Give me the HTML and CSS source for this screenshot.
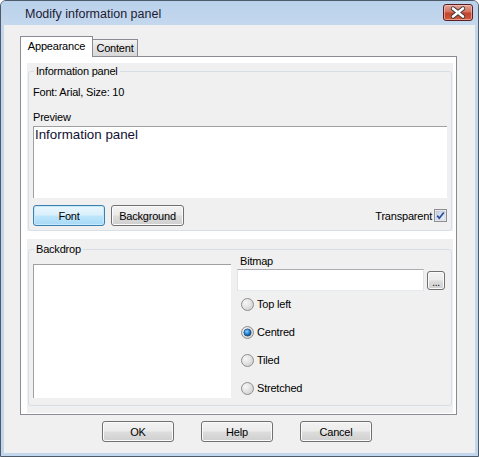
FILE: index.html
```html
<!DOCTYPE html>
<html>
<head>
<meta charset="utf-8">
<link rel="stylesheet" href="styles.css">
</head>
<body>
<div class="window">
  <div class="titlebar">
    <span class="title">Modify information panel</span>
    <div class="close">
      <svg width="30" height="17" viewBox="0 0 30 17">
        <path d="M10 4.5 L20 12.5 M20 4.5 L10 12.5" stroke="#3a3a3a" stroke-width="4.4" stroke-linecap="round" fill="none"/>
        <path d="M10 4.5 L20 12.5 M20 4.5 L10 12.5" stroke="#ffffff" stroke-width="2.6" stroke-linecap="round" fill="none"/>
      </svg>
    </div>
  </div>
  <div class="client">
    <div class="tabs">
      <div class="tab active">Appearance</div>
      <div class="tab">Content</div>
    </div>
    <div class="panel">
      <div class="section s1">
        <div class="group g1">
          <span class="legend">Information panel</span>
          <div class="line">Font: Arial, Size: 10</div>
          <div class="line preview-label">Preview</div>
          <div class="preview">Information panel</div>
          <div class="btnrow">
            <button class="btn default w72">Font</button>
            <button class="btn w73">Background</button>
            <div class="check">
              <span>Transparent</span>
              <svg width="13" height="13" viewBox="0 0 13 13">
                <defs>
                  <linearGradient id="cbg" x1="0" y1="0" x2="1" y2="1">
                    <stop offset="0" stop-color="#c2cfe2"/>
                    <stop offset="1" stop-color="#f1f4f9"/>
                  </linearGradient>
                </defs>
                <rect x="0.5" y="0.5" width="12" height="12" fill="#f4f4f4" stroke="#8f8f8f"/>
                <rect x="2" y="2" width="9" height="9" fill="url(#cbg)" stroke="#b8c4d6" stroke-width="0.6"/>
                <path d="M3.2 6.6 L5.3 9.2 L9.8 3.4" stroke="#2a4a9a" stroke-width="1.7" fill="none"/>
              </svg>
            </div>
          </div>
        </div>
      </div>
      <div class="section s2">
        <div class="group g2">
          <span class="legend">Backdrop</span>
          <div class="cols">
            <div class="listbox"></div>
            <div class="bitmap">
              <div class="line">Bitmap</div>
              <div class="filerow">
                <div class="field"></div>
                <button class="btn dots">...</button>
              </div>
              <div class="radios">
                <div class="radio">
                  <svg width="13" height="13" viewBox="0 0 13 13">
                    <defs>
                      <radialGradient id="rg" cx="0.35" cy="0.35" r="0.75">
                        <stop offset="0" stop-color="#f8f8f8"/>
                        <stop offset="1" stop-color="#cfcfcf"/>
                      </radialGradient>
                      <radialGradient id="rb" cx="0.4" cy="0.35" r="0.7">
                        <stop offset="0" stop-color="#8fd4ff"/>
                        <stop offset="0.5" stop-color="#2a8ad8"/>
                        <stop offset="1" stop-color="#0b3d7a"/>
                      </radialGradient>
                    </defs>
                    <circle cx="6.5" cy="6.5" r="6" fill="url(#rg)" stroke="#8e8f8f"/>
                  </svg>
                  <span>Top left</span>
                </div>
                <div class="radio">
                  <svg width="13" height="13" viewBox="0 0 13 13">
                    <circle cx="6.5" cy="6.5" r="6" fill="url(#rg)" stroke="#8e8f8f"/>
                    <circle cx="6.5" cy="6.5" r="3.6" fill="url(#rb)" stroke="#1d3f6e" stroke-width="0.7"/>
                  </svg>
                  <span>Centred</span>
                </div>
                <div class="radio">
                  <svg width="13" height="13" viewBox="0 0 13 13">
                    <circle cx="6.5" cy="6.5" r="6" fill="url(#rg)" stroke="#8e8f8f"/>
                  </svg>
                  <span>Tiled</span>
                </div>
                <div class="radio">
                  <svg width="13" height="13" viewBox="0 0 13 13">
                    <circle cx="6.5" cy="6.5" r="6" fill="url(#rg)" stroke="#8e8f8f"/>
                  </svg>
                  <span>Stretched</span>
                </div>
              </div>
            </div>
          </div>
        </div>
      </div>
    </div>
    <div class="footer">
      <button class="btn w72">OK</button>
      <button class="btn w72">Help</button>
      <button class="btn w72">Cancel</button>
    </div>
  </div>
</div>
</body>
</html>
```

FILE: styles.css
```css
* { box-sizing: border-box; }

html, body {
  margin: 0;
  padding: 0;
  background: #ffffff;
}

body {
  font-family: "Liberation Sans", Arial, sans-serif;
  font-size: 11px;
  letter-spacing: -0.2px;
  color: #000000;
}

.window {
  width: 479px;
  height: 457px;
  border: 1px solid #4f5a68;
  border-radius: 6px 6px 0 0;
  background: #c2d7ee;
  overflow: hidden;
}

.titlebar {
  height: 24px;
  display: flex;
  align-items: flex-start;
  background: linear-gradient(#b9d1ea, #c4d8ee);
}

.title {
  font-size: 12.5px;
  letter-spacing: 0;
  line-height: 16px;
  margin-top: 5px;
  margin-left: 24px;
  color: #1e1a33;
}

.close {
  margin-left: auto;
  margin-right: 5px;
  margin-top: 3px;
  width: 30px;
  height: 17px;
  border: 1px solid #5a2020;
  border-radius: 3px;
  background: linear-gradient(#e3a497 0%, #d4725f 45%, #c2442c 55%, #cf5a3f 100%);
  box-shadow: inset 0 0 0 1px rgba(255, 210, 200, 0.55);
  position: relative;
}

.close svg {
  position: absolute;
  left: -1px;
  top: -1px;
}

.client {
  margin: 0 3px;
  height: 428px;
  background: #f0f0f0;
  padding: 11px 18px 0 16px;
}

.tabs {
  display: flex;
  align-items: flex-end;
  height: 20px;
}

.tab {
  display: flex;
  align-items: center;
  justify-content: center;
  border: 1px solid #898c95;
  border-bottom: none;
  line-height: 13px;
}

.tab.active {
  width: 73px;
  height: 21px;
  margin-bottom: -1px;
  padding-bottom: 1px;
  background: #ffffff;
  position: relative;
  z-index: 1;
}

.tab:not(.active) {
  width: 45px;
  height: 17px;
  border-left: none;
  background: linear-gradient(#f3f3f3, #e2e2e2 50%, #d8d8d8 100%);
}

.panel {
  width: 437px;
  height: 359px;
  border: 1px solid #898c95;
  background: #ffffff;
  padding: 6px 3px 1px 6px;
  display: flex;
  flex-direction: column;
  gap: 8px;
}

.section {
  background: #f0f0f0;
  padding: 0 1px;
}

.s1 { height: 168px; padding-top: 8px; }
.s2 { height: 174px; padding-top: 10px; }

.group {
  position: relative;
  border: 1px solid #d5dfe5;
  border-radius: 3px;
  padding: 0 4px;
}

.g1 { height: 160px; padding-top: 13px; }
.g2 { height: 157px; padding-top: 4px; }

.legend {
  position: absolute;
  top: -8px;
  left: 5px;
  padding: 0 2px;
  line-height: 14px;
  background: #f0f0f0;
}

.line {
  line-height: 14px;
  height: 14px;
}

.preview-label { margin-top: 11px; }

.preview {
  margin-top: 2px;
  height: 72px;
  background: #ffffff;
  border-top: 1px solid #a0a0a0;
  border-left: 1px solid #a0a0a0;
  font-family: "Liberation Sans", Arial, sans-serif;
  font-size: 13.33px;
  letter-spacing: 0;
  line-height: 15px;
  padding-left: 1px;
  color: #111133;
}

.btnrow {
  margin-top: 7px;
  height: 21px;
  display: flex;
  align-items: center;
  gap: 6px;
}

.btn {
  height: 21px;
  padding: 0;
  margin: 0;
  font-family: "Liberation Sans", Arial, sans-serif;
  font-size: 11px;
  letter-spacing: -0.2px;
  color: #000000;
  border: 1px solid #707070;
  border-radius: 3px;
  background: linear-gradient(#f2f2f2 0%, #ebebeb 48%, #dddddd 52%, #cfcfcf 100%);
  box-shadow: inset 0 0 0 1px #fbfbfb;
}

.btn.default {
  border-color: #3c7fb1;
  background: linear-gradient(#eaf6fd 0%, #d9f0fc 48%, #bee6fd 52%, #a7d9f5 100%);
  box-shadow: inset 0 0 0 1px #c6e9fb;
}

.w72 { width: 72px; }
.w73 { width: 73px; }

.check {
  margin-left: auto;
  display: flex;
  align-items: center;
  gap: 2px;
}

.check svg { display: block; }

.cols {
  display: flex;
  align-items: flex-start;
  gap: 6px;
}

.listbox {
  margin-top: 10px;
  width: 198px;
  height: 134px;
  background: #ffffff;
  border-top: 1px solid #a0a0a0;
  border-left: 1px solid #a0a0a0;
}

.bitmap {
  width: 210px;
}

.bitmap > .line { padding-left: 3px; }

.filerow {
  margin-top: 1px;
  height: 22px;
  display: flex;
  align-items: center;
  gap: 3px;
}

.field {
  width: 187px;
  height: 22px;
  background: #ffffff;
  border: 1px solid #e2e3ea;
  border-top-color: #abadb3;
  border-bottom-color: #e3e9ef;
}

.btn.dots {
  width: 18px;
  height: 19px;
  line-height: 10px;
  padding-top: 6px;
  font-size: 10px;
}

.radios {
  margin-top: 6px;
  display: flex;
  flex-direction: column;
  gap: 14px;
  padding-left: 4px;
}

.radio {
  display: flex;
  align-items: center;
  gap: 3px;
  height: 14px;
  line-height: 14px;
}

.radio svg { display: block; }

.footer {
  margin-top: 6px;
  display: flex;
  justify-content: center;
  gap: 27px;
  padding-right: 3px;
}
```
